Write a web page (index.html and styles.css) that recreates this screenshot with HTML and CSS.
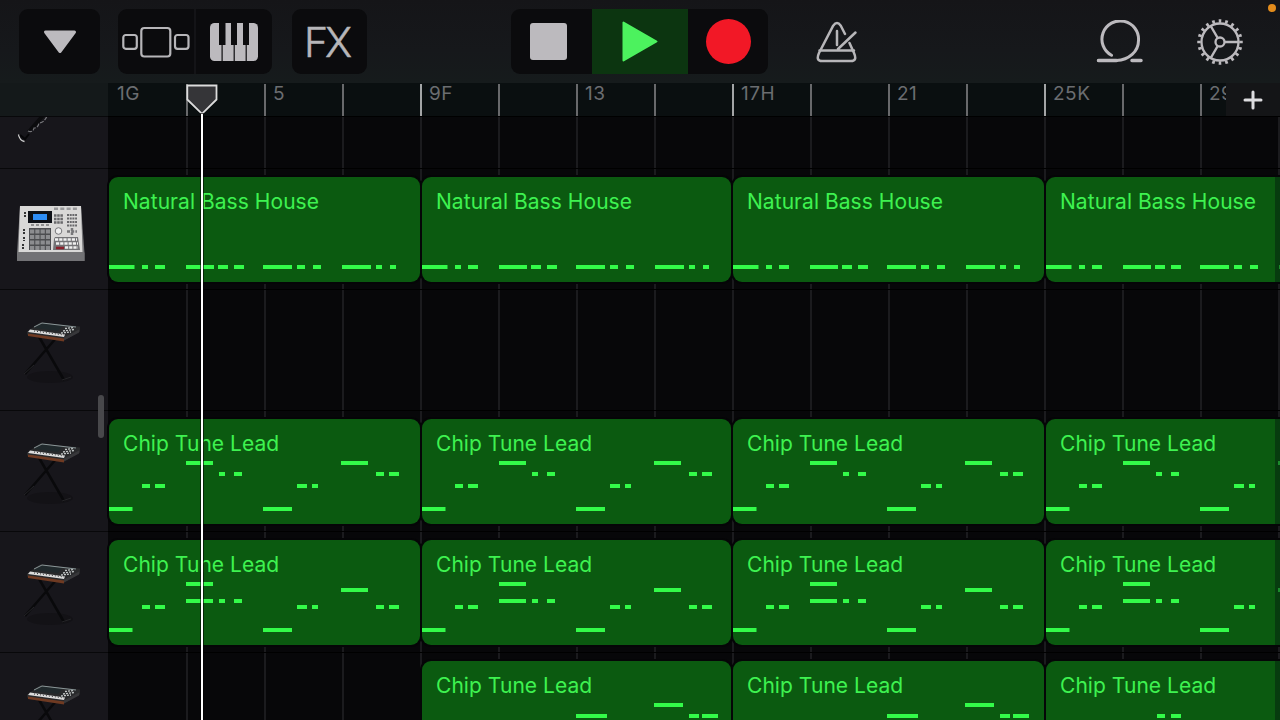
FILE: index.html
```html
<!DOCTYPE html>
<html lang="en">
<head>
    <meta charset="UTF-8">
    <title>Tracks</title>
    <link rel="stylesheet" href="styles.css">
</head>
<body>

<!-- shared shapes -->
<svg class="defs">
    <symbol id="keyboard" viewBox="0 0 108 120">
        <ellipse cx="50" cy="88" rx="23" ry="6" fill="#131216"/>
        <path d="M38 46L64 91M57 48L25 85" stroke="#09090b" stroke-width="2.500" fill="none"/>
        <path d="M24 85L34 76M62 91l9-3" stroke="#242427" stroke-width="1" fill="none"/>
        <path d="M27 42.500L40 33.500l40 4v5l-16 9-37-6z" fill="#28292b"/>
        <path d="M28 44.500l36 5v3l-36-5.500z" fill="#6f3a22"/>
        <path d="M30 40.500l35 5-1 2.500-36-5z" fill="#dcdcdc"/>
        <path d="M34 42l30 4" stroke="#333" stroke-width="1" stroke-dasharray="1 2"/>
        <path d="M34 39l8-4.500 20 2.500-4 5z" fill="#20292c"/>
        <path d="M34 38l8-4 34 4" stroke="#8a9698" stroke-width="1" fill="none"/>
        <path d="M63 42l11-1.500M65 39.500l9-1M61 44l10-1" stroke="#c5c9c9" stroke-width="1.300" stroke-dasharray="2 1"/>
        <path d="M64 48.500l15-8v3l-15 8z" fill="#37373a"/>
    </symbol>
    <symbol id="beat" viewBox="0 0 311 106">
        <path d="M0 90h25.500M33 90h6M46 90h10M77 90h28M109 90h10M125 90h10M154 90h29M188 90h8M204 90h8M233 90h29M267 90h6M281 90h6"/>
    </symbol>
    <symbol id="lead" viewBox="0 0 311 106">
        <path d="M0 90h23.500M33 67h8M46 67h10M77 44h27M110 55h6M125 55h8M154 90h29M188 67h10M203 67h6M232 44h27M267 55h8M280 55h10"/>
    </symbol>
    <symbol id="lead2" viewBox="0 0 311 106">
        <path d="M0 90h23.500M33 67h8M46 67h10M77 44h27M77 61h27M110 61h6M125 61h8M154 90h29M188 67h10M203 67h6M232 50h27M267 67h8M280 67h10"/>
    </symbol>
    <symbol id="lead3" viewBox="0 0 311 106">
        <path d="M154 55h31M232 44h29M267 55h10M280 55h16"/>
    </symbol>
    <symbol id="lead4" viewBox="0 0 311 106">
        <path d="M111 55h8M125 55h10"/>
    </symbol>
</svg>

<div class="app">
    <div class="toolbar">
        <div class="group menu">
            <div class="btn">
                <svg width="34" height="24" viewBox="0 0 34 24"><path d="M2.500 2h29L17 21.500z" fill="#bcbabe" stroke="#bcbabe" stroke-width="3" stroke-linejoin="round"/></svg>
            </div>
        </div>
        <div class="group views">
            <div class="btn">
                <svg width="68" height="32" viewBox="0 0 68 32" fill="none" stroke="#b7b6b9" stroke-width="2.200">
                    <rect x="1.300" y="9" width="13.500" height="13.800" rx="2.500"/>
                    <rect x="19.300" y="2" width="29" height="28.500" rx="3"/>
                    <rect x="53" y="9" width="13.500" height="13.800" rx="2.500"/>
                </svg>
            </div>
            <div class="btn">
                <svg width="48" height="38" viewBox="0 0 48 38">
                    <rect width="48" height="38" rx="4.500" fill="#bcbabe"/>
                    <path d="M9 0h6.500v22H9zM21 0h6v22h-6zM33 0h6v22h-6zM11.500 22h1.200v16h-1.200zM23.600 22h1.200v16h-1.200zM35.600 22h1.200v16h-1.200z" fill="#0c0c0e"/>
                </svg>
            </div>
        </div>
        <div class="group fx">
            <div class="btn">FX</div>
        </div>
        <div class="group transport">
            <div class="btn"><span class="stop"></span></div>
            <div class="btn play">
                <svg width="36" height="41" viewBox="0 0 36 41"><path d="M1.500 1.500v38L34.500 20.500z" fill="#4cf25e" stroke="#4cf25e" stroke-width="2" stroke-linejoin="round"/></svg>
            </div>
            <div class="btn"><span class="record"></span></div>
        </div>
        <div class="icon metronome">
            <svg width="42" height="42" viewBox="0 0 42 42" fill="none" stroke="#b7b6b9" stroke-width="2.500" stroke-linecap="round" stroke-linejoin="round">
                <path d="M29 13l-4.200-8.300q-3.800-5.200-7.600 0L3 32q-3.500 8 3 8h29q6.500 0 3-8l-4.500-10"/>
                <path d="M3.500 29.500h34.500M21 10v14M22 28L39.500 11.500"/>
            </svg>
        </div>
        <div class="icon loop">
            <svg width="48" height="44" viewBox="0 0 48 44" fill="none" stroke="#bcbabe" stroke-width="3" stroke-linecap="round">
                <path d="M2.500 40.500h18C33 40 42.500 31.500 42.500 20.500a18.300 18.300 0 1 0-27 14.800"/>
                <path d="M36 40.500h9M2.500 40.500h18" stroke-width="3.500"/>
            </svg>
        </div>
        <div class="icon gear">
            <svg width="48" height="48" viewBox="-24 -24 48 48" fill="none" stroke="#bcbabe" stroke-width="2.300">
                <circle r="18.500"/>
                <circle r="21" stroke-width="3.500" pathLength="200" stroke-dasharray="4 6" stroke-dashoffset="2"/>
                <circle r="4.500"/>
                <path d="M5 0h14M-2.500-4.300l-7-12M-2.500 4.300l-7 12"/>
            </svg>
        </div>
        <span class="mic"></span>
    </div>

    <div class="ruler">
        <div class="corner"></div>
        <div class="bars">
            <span class="section">1G</span><span></span><span>5</span><span></span>
            <span class="section">9F</span><span></span><span>13</span><span></span>
            <span class="section">17H</span><span></span><span>21</span><span></span>
            <span class="section">25K</span><span></span><span>29</span>
        </div>
        <div class="add"><svg width="20" height="20" viewBox="0 0 20 20"><path d="M10 2v16M2 10h16" stroke="#dddde0" stroke-width="3" stroke-linecap="round"/></svg></div>
    </div>

    <div class="tracks">
        <div class="track first">
            <div class="head">
                <svg width="108" height="52" viewBox="0 0 108 52" fill="none">
                    <path d="M27 15l6-1 12-14h-5z" fill="#0b0b0d"/>
                    <path d="M28 15q5 2 6-3 4 0 5-5 5 0 8-7" stroke="#77777b" stroke-width="1.200" stroke-dasharray="4 1.500"/>
                    <path d="M18.500 18.500q1 6 6 7" stroke="#d5d5d5" stroke-width="1.300"/>
                    <path d="M20 19l5 4 4-5" stroke="#060608" stroke-width="2"/>
                </svg>
            </div>
            <div class="lane"></div>
        </div>
        <div class="track">
            <div class="head">
                <svg width="108" height="121" viewBox="0 0 108 121">
                    <path d="M20 38h61l3.500 47v8H17v-8z" fill="#747477"/>
                    <path d="M20 38h61l1.500 46h-64z" fill="#d9d8d7"/>
                    <path d="M17 84.500h67.500v8.500H17z" fill="#727275"/>
                    <path d="M28 43h24v12H28z" fill="#0d1016"/>
                    <path d="M33 46h14v6H33z" fill="#2d8df5"/>
                    <path d="M31 57h20" stroke="#77777a" stroke-width="1.500" stroke-dasharray="3 2"/>
                    <path d="M29 60h22v22H29z" fill="#4c4d50"/>
                    <path d="M30 63.500h20M30 69h20M30 74.500h20M30 80h20" stroke="#8c8d90" stroke-width="3.800" stroke-dasharray="4.200 1.100"/>
                    <path d="M54 40.800h24" stroke="#98989a" stroke-width="2.500" stroke-dasharray="4 2.300"/>
                    <path d="M54 47.500h9M54 51h9M54 54.500h9" stroke="#68686b" stroke-width="2.500" stroke-dasharray="2.500 .700"/>
                    <path d="M67 47h10M67 50.500h10M67 54h10M67 57.500h10" stroke="#68686b" stroke-width="2" stroke-dasharray="2 .700"/>
                    <circle cx="58.500" cy="63" r="3.300" fill="#eee" stroke="#77777a"/>
                    <path d="M67 63.500h10M72 60v7" stroke="#77777a" stroke-width="2.500" stroke-dasharray="3 1.200"/>
                    <path d="M54 71l1-2h23l2 13H53z" fill="#737376"/>
                    <path d="M55 71.500h22M56 75.500h22M65 79.500h13" stroke="#f0f0f0" stroke-width="2.300" stroke-dasharray="3.200 1"/>
                    <path d="M56 80h8" stroke="#8b1f2b" stroke-width="2.500"/>
                    <path d="M25 44v5M24 61v6M24 69v4M23 76v6" stroke="#333" stroke-width="2" stroke-dasharray="2 1"/>
                </svg>
            </div>
            <div class="lane">
                <div class="clip"><span>Natural Bass House</span><svg class="notes"><use href="#beat"/></svg></div>
                <div class="clip"><span>Natural Bass House</span><svg class="notes"><use href="#beat"/></svg></div>
                <div class="clip"><span>Natural Bass House</span><svg class="notes"><use href="#beat"/></svg></div>
                <div class="clip cut"><span>Natural Bass House</span><svg class="notes"><use href="#beat"/></svg></div>
            </div>
        </div>
        <div class="track">
            <div class="head"><svg width="108" height="120"><use href="#keyboard"/></svg></div>
            <div class="lane"></div>
        </div>
        <div class="track">
            <div class="head"><svg width="108" height="120"><use href="#keyboard"/></svg></div>
            <div class="lane">
                <div class="clip"><span>Chip Tune Lead</span><svg class="notes"><use href="#lead"/></svg></div>
                <div class="clip"><span>Chip Tune Lead</span><svg class="notes"><use href="#lead"/></svg></div>
                <div class="clip"><span>Chip Tune Lead</span><svg class="notes"><use href="#lead"/></svg></div>
                <div class="clip cut"><span>Chip Tune Lead</span><svg class="notes"><use href="#lead"/></svg></div>
            </div>
        </div>
        <div class="track">
            <div class="head"><svg width="108" height="120"><use href="#keyboard"/></svg></div>
            <div class="lane">
                <div class="clip"><span>Chip Tune Lead</span><svg class="notes"><use href="#lead2"/></svg></div>
                <div class="clip"><span>Chip Tune Lead</span><svg class="notes"><use href="#lead2"/></svg></div>
                <div class="clip"><span>Chip Tune Lead</span><svg class="notes"><use href="#lead2"/></svg></div>
                <div class="clip cut"><span>Chip Tune Lead</span><svg class="notes"><use href="#lead2"/></svg></div>
            </div>
        </div>
        <div class="track">
            <div class="head"><svg width="108" height="120"><use href="#keyboard"/></svg></div>
            <div class="lane">
                <div class="empty"></div>
                <div class="clip"><span>Chip Tune Lead</span><svg class="notes"><use href="#lead3"/></svg></div>
                <div class="clip"><span>Chip Tune Lead</span><svg class="notes"><use href="#lead3"/></svg></div>
                <div class="clip cut"><span>Chip Tune Lead</span><svg class="notes"><use href="#lead4"/></svg></div>
            </div>
        </div>
    </div>

    <div class="scrollbar"></div>
    <div class="playhead">
        <svg width="32" height="32" viewBox="0 0 32 32"><path d="M1.300 1.500h29.200v14L16 29.800 1.300 15.500z" fill="#353538" stroke="#dcdcdc" stroke-width="1.800"/></svg>
    </div>
</div>

</body>
</html>
```

FILE: styles.css
```css
body {
    margin: 0;
    background: #060608;
    font-family: Inter, "Liberation Sans", sans-serif;
}

.defs {
    display: none;
}

.app {
    position: relative;
    width: 1280px;
    height: 720px;
    overflow: hidden;
}

/* toolbar */
.toolbar {
    box-sizing: border-box;
    display: flex;
    height: 83px;
    padding: 9px 0 9px 19px;
    background: linear-gradient(#151518, #16181b 60%, #161b1c);
}

.group {
    display: flex;
    height: 65px;
    border-radius: 9px;
    background: #0b0b0d;
    overflow: hidden;
}

.btn {
    box-sizing: border-box;
    flex: 1;
    display: flex;
    align-items: center;
    justify-content: center;
}

.menu {
    width: 81px;
}

.views {
    width: 154px;
    margin-left: 18px;
}

.views .btn + .btn {
    border-left: 2px solid #141417;
}

.fx {
    width: 75px;
    margin-left: 20px;
    color: #b7b6b9;
    font-size: 41px;
    font-weight: 300;
    letter-spacing: -3px;
    -webkit-text-stroke: .5px #b7b6b9;
}

.fx .btn {
    padding-right: 6px;
}

.transport {
    width: 257px;
    margin-left: 144px;
}

.transport .btn:first-child {
    flex: 0 0 81px;
    padding-right: 6px;
}

.transport .play {
    flex: 0 0 96px;
    background: #0c3510;
}

.stop {
    width: 37px;
    height: 37px;
    border-radius: 3px;
    background: #bcbabe;
}

.record {
    width: 45px;
    height: 45px;
    border-radius: 50%;
    background: #f21826;
}

.icon {
    display: flex;
    align-items: center;
    height: 65px;
}

.metronome {
    margin-left: 48px;
}

.loop {
    margin-left: 238px;
}

.gear {
    margin-left: 52px;
}

.mic {
    position: absolute;
    top: 4px;
    right: 4px;
    width: 8px;
    height: 8px;
    border-radius: 50%;
    background: #e38c1c;
}

/* ruler */
.ruler {
    display: flex;
    height: 33px;
    background: #0a0f10;
    overflow: hidden;
}

.corner {
    flex: 0 0 108px;
    background: #14191a;
}

.bars {
    display: flex;
    width: 1118px;
    overflow: hidden;
}

.bars span {
    box-sizing: border-box;
    flex: 0 0 78px;
    height: 32px;
    margin-top: 1px;
    padding-left: 7px;
    border-left: 2px solid #68696b;
    color: #6b6d70;
    font-size: 19px;
    line-height: 19px;
    letter-spacing: .5px;
}

.bars .section {
    border-color: #a3a5a6;
}

.bars span:first-child {
    border-color: transparent;
}

.add {
    flex: 1;
    display: flex;
    align-items: center;
    justify-content: center;
    background: #141517;
}

/* tracks */
.track {
    display: flex;
    height: 121px;
}

.first {
    height: 52px;
}

.head {
    box-sizing: border-box;
    flex: 0 0 108px;
    border-top: 1px solid #08080a;
    background: #17161b;
    overflow: hidden;
}

.head svg {
    display: block;
    margin-top: -1px;
}

.lane {
    box-sizing: border-box;
    flex: 1;
    display: grid;
    grid-template-columns: 311px 309px 311px 1fr;
    column-gap: 2px;
    padding: 8px 0 6px 1px;
    border-top: 1px solid #000;
    background: repeating-linear-gradient(90deg, #070709 0, #070709 76px, #1b1b1e 76px, #1b1b1e 78px) 2px 0;
}

.clip {
    position: relative;
    height: 105px;
    border-radius: 9px;
    background: #0b5a10;
    box-shadow: 0 0 0 2px #050507;
    color: #3ef250;
    overflow: hidden;
}

.cut {
    border-radius: 9px 0 0 9px;
}

/* dimmed strip at the screen edge */
.cut:after {
    content: "";
    position: absolute;
    top: 0;
    right: 0;
    bottom: 0;
    width: 5px;
    background: rgba(4, 30, 14, .5);
}

.clip span {
    display: block;
    padding: 11px 0 0 14px;
    font-size: 21px;
    line-height: 27px;
    letter-spacing: .05px;
    white-space: nowrap;
}

/* midi notes drawn over the clip */
.notes {
    position: absolute;
    top: 0;
    left: 0;
    width: 311px;
    height: 106px;
    stroke: #33fb49;
    stroke-width: 4;
}

.scrollbar {
    position: absolute;
    top: 395px;
    left: 98px;
    width: 6px;
    height: 43px;
    border-radius: 3px;
    background: #48484b;
}

.playhead {
    position: absolute;
    top: 84px;
    left: 186px;
    width: 32px;
    height: 636px;
}

.playhead:after {
    content: "";
    position: absolute;
    top: 30px;
    bottom: 0;
    left: 15px;
    width: 2px;
    background: #fff;
    box-shadow: 0 0 0 1px rgba(0, 0, 0, .6);
}
```
